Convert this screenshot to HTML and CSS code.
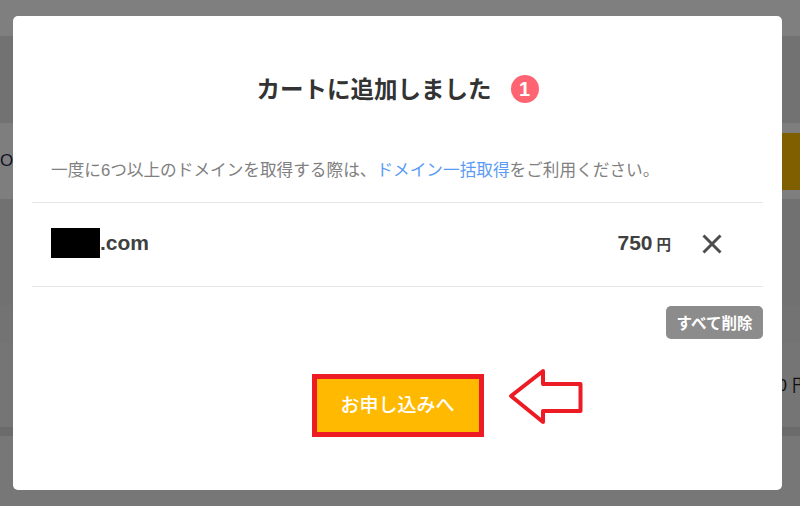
FILE: index.html
```html
<!DOCTYPE html>
<html lang="ja">
<head>
<meta charset="utf-8">
<title>カートに追加しました</title>
<link rel="stylesheet" href="styles.css">
</head>
<body>
<div class="page">
  <div class="band band-head"></div>
  <div class="band band-a"></div>
  <div class="band band-result">
    <span class="bg-text">O</span>
    <span class="bg-action"></span>
  </div>
  <div class="band band-b"></div>
  <div class="band band-c"></div>
  <div class="band band-price">
    <span class="bg-price">0<span class="bg-yen">円</span></span>
  </div>
  <div class="band band-line"></div>
  <div class="band band-foot"></div>
</div>
<div class="overlay"></div>
<section class="modal">
  <header class="modal-head">
    <h2 class="modal-title">カートに追加しました</h2>
    <span class="count">1</span>
  </header>
  <p class="note">一度に6つ以上のドメインを取得する際は、<a class="note-link" href="#">ドメイン一括取得</a>をご利用ください。</p>
  <div class="item">
    <div class="domain"><span class="mask"></span>.com</div>
    <div class="price">750<span class="yen">円</span></div>
    <button class="remove" type="button" aria-label="削除">
      <svg viewBox="0 0 22 22" width="22" height="22"><path d="M2.5 2.5 L19.5 19.5 M19.5 2.5 L2.5 19.5" fill="none" stroke="#4d4d4d" stroke-width="3"/></svg>
    </button>
  </div>
  <div class="clear-row"><button class="clear" type="button">すべて削除</button></div>
  <div class="cta-row">
    <div class="cta-wrap">
      <button class="cta" type="button">お申し込みへ</button>
      <svg class="arrow" viewBox="0 0 80 62" width="80" height="62"><path d="M3 29 L35 4 V17 H72.500 V44 H35 V55 Z" fill="#fff" stroke="#ed1c24" stroke-width="4" stroke-linejoin="round"/></svg>
    </div>
  </div>
</section>
</body>
</html>
```
FILE: styles.css
```css
* { box-sizing: border-box; }
html, body { margin: 0; padding: 0; height: 100%; }
body {
  width: 800px;
  height: 506px;
  overflow: hidden;
  position: relative;
  font-family: "Liberation Sans", "Noto Sans CJK JP", sans-serif;
  background: #fff;
}
.page { display: flex; flex-direction: column; height: 506px; overflow: hidden; }
.band { flex: none; display: flex; align-items: center; justify-content: space-between; }
.band-head { height: 36px; background: #ffffff; }
.band-a { height: 87px; background: #e4e4e4; }
.band-result { height: 76px; background: #fdfdfd; }
.bg-text { font-size: 17px; color: #1c2b4a; margin-left: 0; }
.bg-action { width: 18px; height: 57px; background: #ffbf00; }
.band-b { height: 106px; background: #e2e2e2; }
.band-c { height: 38px; background: #e6e6e6; }
.band-price { height: 84px; background: #eaeaea; justify-content: flex-end; padding-bottom: 4px; }
.bg-price { font-size: 17px; color: #222; margin-right: -9px; white-space: nowrap; }
.bg-yen { margin-left: 5px; }
.band-line { height: 9px; background: #d6d6d6; }
.band-foot { flex: 1; background: #efefef; }
.overlay { position: absolute; inset: 0; background: rgba(0, 0, 0, .5); }
.modal {
  position: absolute;
  left: 13px;
  top: 16px;
  width: 769px;
  height: 474px;
  background: #fff;
  border-radius: 5px;
  padding: 0 19px;
  display: flex;
  flex-direction: column;
}
.modal-head {
  height: 74px;
  margin-top: 44px;
  padding-bottom: 16px;
  display: flex;
  align-items: center;
  justify-content: center;
  gap: 19px;
  padding-left: 0;
}
.modal-title { margin: 4px 0 0; font-size: 23.500px; font-weight: 700; color: #333; line-height: 1; }
.count {
  width: 28px;
  height: 28px;
  border-radius: 50%;
  background: #ff6473;
  color: #fff;
  font-size: 20px;
  font-weight: 700;
  display: flex;
  align-items: center;
  justify-content: center;
}
.note {
  margin: 0;
  height: 69px;
  padding: 1px 0 0 19px;
  display: flex;
  align-items: center;
  font-size: 16.650px;
  color: #808080;
  border-bottom: 1px solid #e6e6e6;
  white-space: nowrap;
}
.note-link { color: #5b9bf5; text-decoration: none; }
.item {
  height: 84px;
  padding: 0 0 3px 19px;
  display: flex;
  align-items: center;
  border-bottom: 1px solid #e6e6e6;
}
.domain { flex: 1; display: flex; align-items: center; font-size: 21px; font-weight: 700; color: #404040; }
.mask { width: 49px; height: 30px; background: #000; }
.price { font-size: 21px; font-weight: 700; color: #404040; display: flex; align-items: baseline; }
.yen { font-size: 14.500px; margin-left: 4px; }
.remove { border: 0; background: none; padding: 0; margin: 1px 40px 0 30px; width: 22px; height: 22px; display: block; }
.remove svg { display: block; }
.clear-row { display: flex; justify-content: flex-end; padding-top: 19px; }
.clear {
  width: 97px;
  height: 33px;
  border: 0;
  border-radius: 5px;
  background: #8c8c8c;
  color: #fff;
  font: 700 15.500px "Liberation Sans", "Noto Sans CJK JP", sans-serif;
  padding: 0 0 2px;
}
.cta-row { display: flex; justify-content: center; padding-top: 35px; }
.cta-wrap { position: relative; }
.cta {
  display: block;
  width: 172px;
  height: 63px;
  border: 5px solid #ed1c24;
  background: #ffb900;
  color: #fff;
  font: 500 19px "Liberation Sans", "Noto Sans CJK JP", sans-serif;
  padding: 0 0 5px;
}
.arrow { position: absolute; left: 196px; top: -7px; }
```
